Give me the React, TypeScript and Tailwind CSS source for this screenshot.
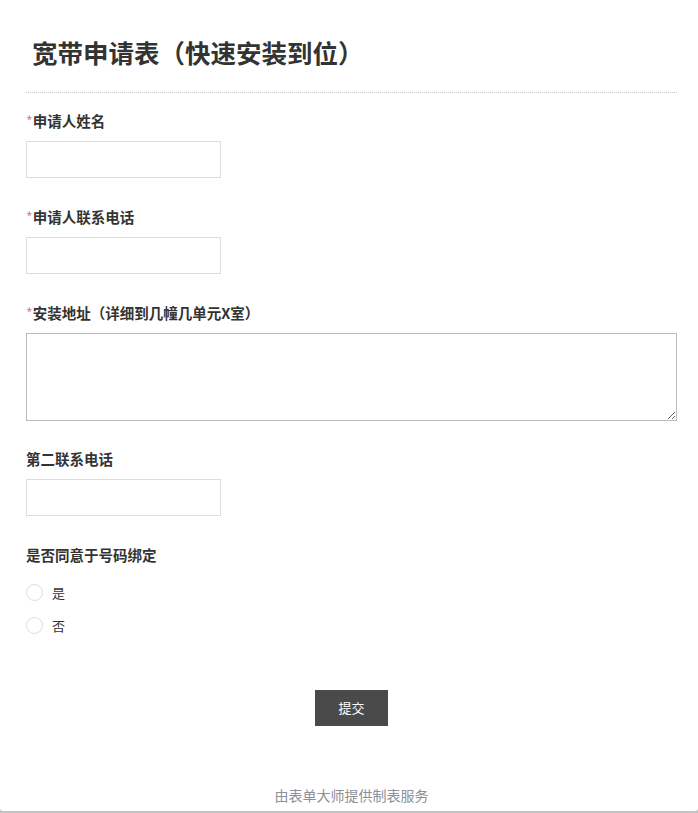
import React, { useState } from "react";

const fields = [
  { label: "申请人姓名", required: true, kind: "input" },
  { label: "申请人联系电话", required: true, kind: "input" },
  { label: "安装地址（详细到几幢几单元X室）", required: true, kind: "textarea" },
  { label: "第二联系电话", required: false, kind: "input" },
];

export default function App() {
  const [agree, setAgree] = useState<string | null>(null);

  return (
    <div
      className="min-h-screen bg-[#c4c4c4] [text-spacing-trim:space-all]"
      style={{ fontFamily: '"Noto Sans CJK SC", "Noto Sans", sans-serif' }}
    >
      <div className="h-[811px] bg-white rounded-b-[3px] pl-[26px] pr-[21px] text-[#333]">
        {/* Header */}
        <div className="pt-[36px] pb-[24px] border-b border-dotted border-[#c8c8c8]">
          <h1 className="pl-[6px] text-[25.5px] leading-[32px] font-bold text-[#333]">
            宽带申请表（快速安装到位）
          </h1>
        </div>

        {/* Fields */}
        <div className="pt-[19px]">
          {fields.map((f) => (
            <div key={f.label} className={f.kind === "textarea" ? "mb-[29px]" : "mb-[30px]"}>
              <label className="block h-5 text-[14.5px] leading-[18px] font-bold">
                {f.required && <span className="text-[#f08080] font-normal">*</span>}
                {f.label}
              </label>
              {f.kind === "input" ? (
                <input
                  type="text"
                  className="mt-[9px] block w-[195px] h-[37px] border border-[#ddd] bg-white px-2 text-[14px] outline-none"
                />
              ) : (
                <textarea className="mt-[9px] block w-full h-[88px] border border-[#bbb] bg-white px-2 text-[14px] outline-none" />
              )}
            </div>
          ))}

          {/* Radio question */}
          <div>
            <div className="h-5 text-[14.5px] leading-[18px] font-bold">是否同意于号码绑定</div>
            <div className="mt-[10px]">
              {["是", "否"].map((opt) => (
                <label key={opt} className="flex items-center h-[33px] cursor-pointer">
                  <span
                    onClick={() => setAgree(opt)}
                    className="w-[17px] h-[17px] rounded-full border border-[#ddd] bg-white flex items-center justify-center"
                  >
                    {agree === opt && <span className="w-[7px] h-[7px] rounded-full bg-[#4a4a4a]" />}
                  </span>
                  <span className="ml-[9px] text-[13px]">{opt}</span>
                </label>
              ))}
            </div>
          </div>

          {/* Submit */}
          <div className="flex justify-center mt-[48px]">
            <button className="w-[73px] h-[36px] bg-[#4a4a4a] text-white text-[13px]">
              提交
            </button>
          </div>

          {/* Footer */}
          <div className="mt-[59px] text-center text-[14px] leading-5 text-[#8b909a]">
            由表单大师提供制表服务
          </div>
        </div>
      </div>
    </div>
  );
}
